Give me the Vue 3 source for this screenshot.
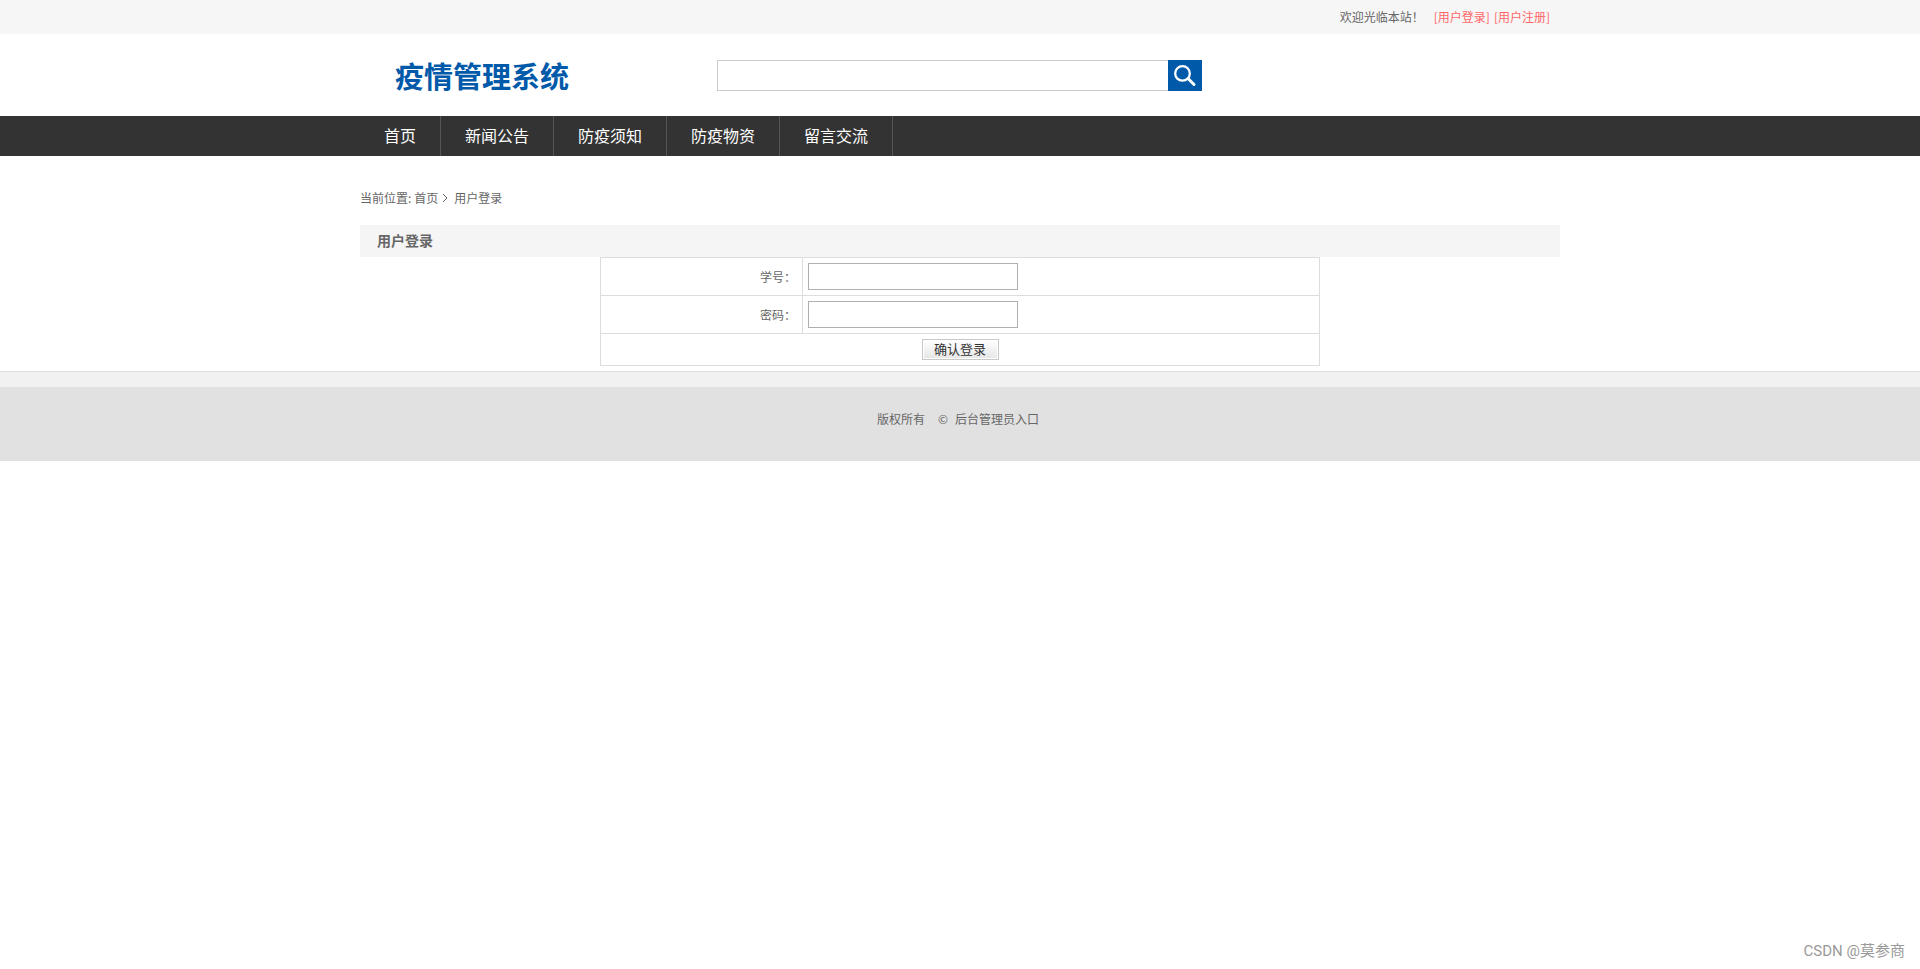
<script setup>
import { ref } from 'vue'

const menu = ['首页', '新闻公告', '防疫须知', '防疫物资', '留言交流']
const keyword = ref('')
const studentId = ref('')
const password = ref('')
</script>

<template>
  <div class="page" lang="zh-CN">
    <div class="topbar">
      <div class="wrap topbar-inner">
        <span class="welcome">欢迎光临本站！</span>
        <a href="#login">[用户登录]</a>
        <a href="#register">[用户注册]</a>
      </div>
    </div>

    <header class="wrap header">
      <h1 class="logo">疫情管理系统</h1>
      <form class="search" @submit.prevent>
        <input v-model="keyword" type="text" aria-label="搜索" />
        <button type="submit" aria-label="搜索">
          <svg width="34" height="31" viewBox="0 0 34 31" fill="none" stroke="#fff">
            <circle cx="14.5" cy="13.4" r="7.3" stroke-width="2.3" />
            <path d="M20 18.5L26 24.5" stroke-width="3" stroke-linecap="round" />
          </svg>
        </button>
      </form>
    </header>

    <nav class="nav">
      <ul class="wrap">
        <li v-for="item in menu" :key="item"><a href="#">{{ item }}</a></li>
      </ul>
    </nav>

    <main class="wrap">
      <div class="crumbs">
        <span>当前位置:</span>
        <a href="#">首页</a>
        <svg width="6" height="10" viewBox="0 0 6 10" fill="none" stroke="#666">
          <path d="M1 1L5 5L1 9" />
        </svg>
        <span class="current">用户登录</span>
      </div>
      <h2 class="title">用户登录</h2>
      <form @submit.prevent>
        <table class="login">
          <tbody>
            <tr>
              <td class="label"><label for="student">学号：</label></td>
              <td><input id="student" v-model="studentId" type="text" /></td>
            </tr>
            <tr>
              <td class="label"><label for="password">密码：</label></td>
              <td><input id="password" v-model="password" type="password" /></td>
            </tr>
            <tr>
              <td colspan="2"><button type="submit">确认登录</button></td>
            </tr>
          </tbody>
        </table>
      </form>
    </main>

    <footer class="footer">
      <div class="copyright">
        <span>版权所有</span>
        <span class="mark">©</span>
        <a href="#admin">后台管理员入口</a>
      </div>
    </footer>

    <div class="watermark">CSDN @莫参商</div>
  </div>
</template>

<style>
body {
  margin: 0;
  background: #fff;
}
</style>

<style scoped>
.page {
  position: relative;
  min-height: 100vh;
  font: 12px/20px "Noto Sans CJK SC", sans-serif;
  color: #666;
}
.page * {
  box-sizing: border-box;
}
a {
  color: inherit;
  text-decoration: none;
}
input,
button {
  font: inherit;
  margin: 0;
}
.wrap {
  max-width: 1200px;
  margin: 0 auto;
}
.topbar {
  background: #f6f6f6;
}
.topbar-inner {
  display: flex;
  justify-content: flex-end;
  gap: 4px;
  padding: 7px 10px;
}
.welcome {
  margin-right: 6px;
}
.topbar a {
  color: #f66;
}
.header {
  display: flex;
  align-items: center;
  padding: 20px 0 19px 35px;
}
.logo {
  width: 322px;
  margin: 0;
  font-size: 29px;
  line-height: 43px;
  color: #0059a9;
}
.search {
  display: flex;
  width: 485px;
}
.search input {
  flex: 1;
  min-width: 0;
  height: 31px;
  padding: 0 8px;
  border: 1px solid #ccc;
  border-right: 0;
}
.search button {
  height: 31px;
  padding: 0;
  border: 0;
  background: #0059a9;
}
.search svg {
  display: block;
}
.nav {
  background: #333;
}
.nav ul {
  display: flex;
  padding: 0;
  list-style: none;
}
.nav a {
  display: block;
  padding: 0 24px 2px;
  border-right: 1px solid #555;
  font-size: 16px;
  line-height: 38px;
  color: #fff;
}
.crumbs {
  display: flex;
  align-items: center;
  gap: 3px;
  padding: 32px 0 17px;
}
.crumbs svg {
  margin-left: 1px;
}
.current {
  margin-left: 3px;
}
.title {
  margin: 0;
  padding: 0 17px 2px;
  background: #f5f5f5;
  font-size: 14px;
  line-height: 30px;
}
.login {
  width: 60%;
  margin: 0 auto 5px;
  border-collapse: separate;
  border-spacing: 0;
  border: solid #ddd;
  border-width: 1px 0 0 1px;
}
.login td {
  padding: 5px;
  border: solid #ddd;
  border-width: 0 1px 1px 0;
}
.login .label {
  width: 202px;
  padding-right: 6px;
  text-align: right;
}
.login input {
  display: block;
  width: 210px;
  height: 27px;
  padding: 0 4px;
  border: 1px solid #b0b0b0;
}
.login button {
  display: block;
  width: 77px;
  height: 21px;
  margin: 0 auto;
  padding: 0 0 2px;
  border: 1px solid #c8c8c8;
  background: linear-gradient(#fff, #e6e6e6);
  box-shadow: inset 0 0 0 1px #fff;
  font-size: 13px;
  line-height: 17px;
  color: #333;
}
.footer {
  border-top: 1px solid #ddd;
  padding-top: 15px;
  background: #f1f1f1;
}
.copyright {
  display: flex;
  justify-content: center;
  padding: 22px 4px 32px 0;
  background: #e1e1e1;
}
.mark {
  margin: 0 7px 0 13px;
}
.watermark {
  position: absolute;
  right: 15px;
  bottom: 6px;
  font: 15px/24px Roboto, "Noto Sans CJK SC", sans-serif;
  color: #999;
}
</style>
